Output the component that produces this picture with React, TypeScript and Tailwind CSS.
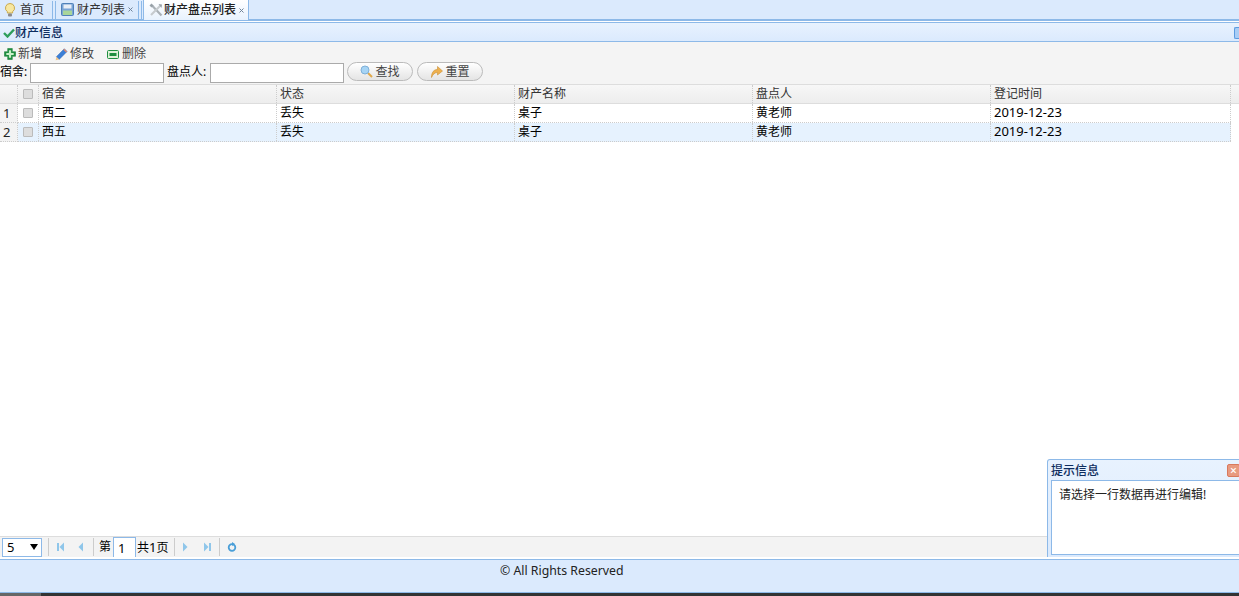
import { ReactNode } from "react";

const font = "font-['Noto_Sans','Noto_Sans_CJK_SC',sans-serif]";

const columns = [
  { key: "dorm", title: "宿舍", width: "w-[238px]" },
  { key: "status", title: "状态", width: "w-[238px]" },
  { key: "name", title: "财产名称", width: "w-[238px]" },
  { key: "person", title: "盘点人", width: "w-[238px]" },
  { key: "time", title: "登记时间", width: "w-[240px]" },
];

const rows = [
  { dorm: "西二", status: "丢失", name: "桌子", person: "黄老师", time: "2019-12-23" },
  { dorm: "西五", status: "丢失", name: "桌子", person: "黄老师", time: "2019-12-23" },
];

function Bulb() {
  return (
    <svg width="10" height="14" viewBox="0 0 10 14">
      <path d="M5 .5a4.500 4.500 0 0 1 2.600 8.200V10H2.400V8.700A4.500 4.500 0 0 1 5 .5z" fill="#f7e7a0" stroke="#c9a94e" />
      <rect x="3" y="10.500" width="4" height="3" rx="1" fill="#8a8a8a" />
    </svg>
  );
}

function Save() {
  return (
    <svg width="13" height="13" viewBox="0 0 13 13">
      <rect x=".5" y=".5" width="12" height="12" rx="1" fill="#7aa5d6" stroke="#4f81b8" />
      <rect x="2.500" y="1.500" width="8" height="4" fill="#e8eef5" />
      <rect x="2" y="7.500" width="9" height="4.500" fill="#a9d69a" />
    </svg>
  );
}

function Tools() {
  return (
    <svg width="14" height="14" viewBox="0 0 14 14" fill="none">
      <path d="M3 2.500l9.500 10" stroke="#a9b0b6" strokeWidth="2.200" />
      <path d="M11.500 2.500L2 12" stroke="#c6cbcf" strokeWidth="2.200" />
      <path d="M9.500 1l3.500 .5-.5 3.500z" fill="#98a1a8" />
      <path d="M.500 2.500L2.500 .5l2 2-2 2z" fill="#98a1a8" />
    </svg>
  );
}

function Close() {
  return (
    <svg width="5" height="5" viewBox="0 0 5 5">
      <path d="M.5.5l4 4M4.500.5l-4 4" stroke="#6f8399" strokeWidth="1" />
    </svg>
  );
}

function Check() {
  return (
    <svg width="12" height="10" viewBox="0 0 12 10" fill="none">
      <path d="M1 5l3.500 3.500L11 1.500" stroke="#2f9e5b" strokeWidth="2.400" />
    </svg>
  );
}

function Plus() {
  return (
    <svg width="12" height="12" viewBox="0 0 13 13">
      <path d="M4 .5h5V4h3.500v5H9v3.500H4V9H.5V4H4z" fill="#1f8f3f" stroke="#167a34" strokeWidth=".6" strokeLinejoin="round" />
      <path d="M5.300 2.500h2.400v2.800h2.800v2.400H7.700v2.800H5.300V7.700H2.500V5.300h2.800z" fill="#c9f0c9" />
    </svg>
  );
}

function Pencil() {
  return (
    <svg width="13" height="13" viewBox="0 0 14 14">
      <path d="M10 .8l3 3-8.500 8.500-3-3z" fill="#3c7fd6" stroke="#2b63b0" strokeWidth=".5" />
      <path d="M1.500 9.300l3 3-3.800 1z" fill="#eec48a" />
      <path d="M10 .8l3 3-1 1-3-3z" fill="#e58a6a" />
    </svg>
  );
}

function Minus() {
  return (
    <svg width="12" height="9" viewBox="0 0 12 9">
      <rect x=".5" y=".5" width="11" height="8" rx="1" fill="#dff2d8" stroke="#1f8f3f" />
      <rect x="2.500" y="3" width="7" height="3" fill="#1f8f3f" />
    </svg>
  );
}

function Search() {
  return (
    <svg width="13" height="13" viewBox="0 0 13 13" fill="none">
      <path d="M8 8l4 4" stroke="#e0a94a" strokeWidth="2" />
      <circle cx="5" cy="5" r="4" fill="#a6d4f5" stroke="#7fb0d8" />
    </svg>
  );
}

function Undo() {
  return (
    <svg width="13" height="13" viewBox="0 0 13 13">
      <path d="M1.500 12.500C1.500 7 4 4.500 7.500 4.500V1.500l5 4.500-5 4V7.500C5 7.500 3 9 1.500 12.500z" fill="#eeb04e" stroke="#c98f33" strokeWidth=".6" />
    </svg>
  );
}

function ToolButton({ icon, label, iconWidth }: { icon: ReactNode; label: string; iconWidth: string }) {
  return (
    <span className="flex items-center gap-[2px] text-[#444]">
      <span className={`flex h-[14px] items-center justify-start ${iconWidth}`}>{icon}</span>
      {label}
    </span>
  );
}

function SearchButton({ icon, label }: { icon: ReactNode; label: string }) {
  return (
    <button className="flex h-[19px] w-[66px] items-center justify-center gap-[2px] rounded-full border border-[#bbb] bg-gradient-to-b from-white to-[#e4e4e4] text-[#444]">
      {icon}
      {label}
    </button>
  );
}

function Sep() {
  return <span className="block h-[18px] w-px bg-[#ccc]" />;
}

function PagerArrow({ flip, bar }: { flip?: boolean; bar?: boolean }) {
  return (
    <svg width="8" height="10" viewBox="0 0 8 10" className={flip ? "-scale-x-100" : ""}>
      <path d="M7 .5v9L2.500 5z" fill="#8fc6ea" />
      {bar && <rect x="0" y="1" width="2" height="8" fill="#8fc6ea" />}
    </svg>
  );
}

export default function App() {
  return (
    <div className={`${font} relative flex h-[596px] w-[1239px] flex-col overflow-hidden bg-white text-[12px] leading-[16px] text-black`}>
      {/* tabs */}
      <div className="flex h-[21px] shrink-0 items-center border-b-2 border-[#8db9e8] bg-[#dbeafd]">
        <span className="ml-[5px] flex w-[47px] items-center gap-[5px] text-[#333]">
          <Bulb />
          首页
        </span>
        <span className="mr-[5px] h-[18px] w-[4px] border-x border-[#8db9e8]" />
        <span className="flex w-[77px] items-center text-[#333]">
          <Save />
          <span className="ml-[3px]">财产列表</span>
          <span className="ml-[3px]"><Close /></span>
        </span>
        <span className="h-[18px] w-[4px] border-x border-[#8db9e8]" />
        <span className="ml-[1px] flex h-[21px] w-[106px] items-center border-x border-t border-[#8db9e8] bg-gradient-to-b from-white to-[#e8f2fe] pl-[5px] font-medium text-[#222]">
          <Tools />
          <span className="ml-[1px]">财产盘点列表</span>
          <span className="ml-[3px]"><Close /></span>
        </span>
      </div>

      {/* panel title */}
      <div className="mt-[1px] flex h-[20px] shrink-0 items-center justify-between border-y border-[#8db9e8] bg-gradient-to-b from-[#e8f2fe] to-[#dbeafd] pl-[3px] pt-[2px] font-medium text-[#0e2d5f]">
        <span className="flex items-center">
          <Check />
          财产信息
        </span>
        <span className="-mt-[1px] h-[12px] w-[5px] rounded-l-[2px] border border-r-0 border-[#5b9be0] bg-[#a9cdf5]" />
      </div>

      {/* toolbar */}
      <div className="h-[42px] shrink-0 bg-[#f4f4f4]">
        <div className="flex h-[21px] items-end gap-[13px] pb-[1px] pl-[4px]">
          <ToolButton icon={<Plus />} label="新增" iconWidth="w-[12px]" />
          <ToolButton icon={<Pencil />} label="修改" iconWidth="w-[13px]" />
          <ToolButton icon={<Minus />} label="删除" iconWidth="w-[13px]" />
        </div>
        <div className="flex h-[21px] items-start">
          <span className="w-[30px] pt-[1px]">宿舍:</span>
          <input className="h-[20px] w-[134px] border border-[#aaa] bg-white" />
          <span className="w-[46px] pl-[3px] pt-[1px]">盘点人:</span>
          <input className="h-[20px] w-[134px] border border-[#aaa] bg-white" />
          <span className="-mt-[1px] ml-[3px] flex gap-[4px]">
            <SearchButton icon={<Search />} label="查找" />
            <SearchButton icon={<Undo />} label="重置" />
          </span>
        </div>
      </div>

      {/* grid */}
      <div className="min-h-0 flex-1">
        <div className="flex h-[20px] border-y border-[#ddd] bg-gradient-to-b from-[#f7f7f7] to-[#ededed] text-[#333]">
          <div className="w-[18px] border-r border-dotted border-[#ccc]" />
          <div className="flex w-[21px] items-center justify-center border-r border-dotted border-[#ccc]">
            <span className="h-[10px] w-[10px] rounded-[1px] border border-[#bbb] bg-[#ddd]" />
          </div>
          {columns.map((c) => (
            <div key={c.key} className={`${c.width} border-r border-dotted border-[#ccc] pl-[3px] leading-[18px]`}>
              {c.title}
            </div>
          ))}
        </div>
        {rows.map((row, index) => (
          <div key={index} className="flex h-[19px] w-[1231px]">
            <div className="w-[18px] border-r border-b border-dotted border-[#ccc] bg-[#f3f3f3] pl-[3px] text-[13px] leading-[18px] text-[#222]">
              {index + 1}
            </div>
            <div className={`flex flex-1 border-b border-dotted border-[#ccc] ${index === 1 ? "bg-[#e6f2fe]" : "bg-white"}`}>
              <div className="flex w-[21px] items-center justify-center border-r border-dotted border-[#ccc]">
                <span className="h-[10px] w-[10px] rounded-[1px] border border-[#bbb] bg-[#ddd]" />
              </div>
              {columns.map((c) => (
                <div
                  key={c.key}
                  className={`${c.width} border-r border-dotted border-[#ccc] pl-[3px] ${c.key === "time" ? "text-[13px] leading-[17px]" : "leading-[18px]"}`}
                >
                  {row[c.key as keyof typeof row]}
                </div>
              ))}
            </div>
          </div>
        ))}
      </div>

      {/* pager */}
      <div className="h-[23px] shrink-0">
        <div className="flex h-[21px] items-center border-t border-[#ddd] bg-[#f3f3f3] pl-[2px]">
          <span className="flex h-[19px] w-[40px] items-center justify-between border border-[#8db9e8] bg-white pl-[4px] pr-[3px] text-[13px]">
            5<span className="h-0 w-0 border-x-[4px] border-t-[6px] border-x-transparent border-t-black" />
          </span>
          <span className="ml-[6px]"><Sep /></span>
          <span className="ml-[8px] flex"><PagerArrow bar /></span>
          <span className="ml-[11px] flex"><PagerArrow /></span>
          <span className="ml-[9px]"><Sep /></span>
          <span className="ml-[5px]">第</span>
          <span className="ml-[2px] h-[20px] w-[23px] self-end border border-b-0 border-[#8db9e8] bg-white pl-[4px] text-[13px] leading-[20px]">1</span>
          <span className="ml-[1px]">共<span className="text-[13px]">1</span>页</span>
          <span className="ml-[6px]"><Sep /></span>
          <span className="ml-[7px] flex"><PagerArrow flip /></span>
          <span className="ml-[13px] flex"><PagerArrow flip bar /></span>
          <span className="ml-[8px]"><Sep /></span>
          <svg width="10" height="10" viewBox="0 0 10 10" fill="none" className="ml-[7px]">
            <circle cx="5" cy="5.500" r="3.300" stroke="#4a9fd8" strokeWidth="1.800" />
            <path d="M5 0l3 2-3 2z" fill="#4a9fd8" />
          </svg>
        </div>
      </div>

      {/* footer */}
      <div className="h-[34px] shrink-0 border-y border-[#8db9e8] bg-[#dbeafd] pl-[500px] pt-[1px] text-[12.3px] leading-[20px] text-[#222]">
        © All Rights Reserved
      </div>
      <div className="flex h-[3px] shrink-0 bg-[#333]">
        <span className="w-[41px] bg-[#666]" />
      </div>

      {/* message popup */}
      <div className="absolute left-[1047px] top-[459px] h-[98px] w-[200px] rounded-tl-[3px] border border-b-0 border-[#8db9e8] bg-gradient-to-b from-[#e8f2fe] to-[#dbeafd] px-[3px]">
        <div className="flex h-[20px] items-center pt-[1px] font-medium text-[#0e2d5f]">
          提示信息
          <span className="ml-[128px] flex h-[13px] w-[13px] items-center justify-center rounded-[2px] border border-[#d9795c] bg-[#e89a80] text-[12px] leading-none text-white">×</span>
        </div>
        <div className="h-[75px] border border-[#8db9e8] bg-white pl-[7px] pt-[6px] text-[#222]">
          请选择一行数据再进行编辑!
        </div>
      </div>
    </div>
  );
}
